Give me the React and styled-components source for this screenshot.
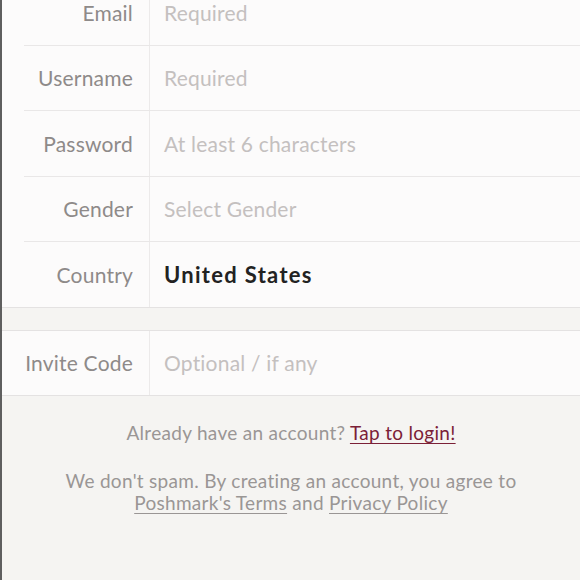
import React from "react";
import styled, { createGlobalStyle } from "styled-components";

const Global = createGlobalStyle`
  html, body { margin: 0; padding: 0; background: #f5f4f2; }
  body { font-family: "Lato", "Open Sans", sans-serif; overflow: hidden; }
`;

const Page = styled.div`
  width: 580px;
  height: 580px;
  box-sizing: border-box;
  border-left: 2px solid #5f5f5f;
  background: #f5f4f2;
  overflow: hidden;
`;

const Section = styled.div`
  background: #fcfbfb;
  border-bottom: 1px solid #e4e2e2;
  border-top: ${(p) => (p.$top ? "1px solid #e4e2e2" : "none")};
  margin-top: ${(p) => p.$offset || 0}px;
`;

const Row = styled.div`
  display: grid;
  grid-template-columns: 126px 1fr;
  margin-left: 22px;
  height: 64.5px;
  border-bottom: ${(p) => (p.$last ? "none" : "1px solid #e9e7e7")};
`;

const Label = styled.div`
  display: flex;
  align-items: center;
  justify-content: flex-end;
  padding-right: 16px;
  border-right: 1px solid #eceaea;
  color: #8e8a89;
  font-size: 21px;
  letter-spacing: 0.2px;
`;

const Value = styled.div`
  display: flex;
  align-items: center;
  padding-left: 14px;
  font-size: ${(p) => (p.$filled ? 22 : 21)}px;
  letter-spacing: ${(p) => (p.$filled ? 1.3 : 0.2)}px;
  color: ${(p) => (p.$filled ? "#222" : "#c4c0bf")};
  font-weight: ${(p) => (p.$filled ? 700 : 400)};
`;

const Gap = styled.div`
  height: 22px;
`;

const Footer = styled.div`
  text-align: center;
  color: #9a9695;
  font-size: 19px;
  letter-spacing: 0.3px;
  padding-top: 26px;
`;

const Line = styled.p`
  margin: 0 0 ${(p) => p.$mb || 0}px;
  line-height: 22px;
`;

const Link = styled.a`
  color: ${(p) => (p.$accent ? "#7b2037" : "#9a9695")};
  text-decoration: underline;
  text-underline-offset: 3px;
  text-decoration-thickness: 1px;
`;

const fields = [
  { label: "Email", value: "Required" },
  { label: "Username", value: "Required" },
  { label: "Password", value: "At least 6 characters" },
  { label: "Gender", value: "Select Gender" },
  { label: "Country", value: "United States", filled: true },
];

export default function App() {
  return (
    <Page>
      <Global />
      <Section $offset={-20}>
        {fields.map((f, i) => (
          <Row key={f.label} $last={i === fields.length - 1}>
            <Label>{f.label}</Label>
            <Value $filled={f.filled}>{f.value}</Value>
          </Row>
        ))}
      </Section>
      <Gap />
      <Section $top>
        <Row $last>
          <Label>Invite Code</Label>
          <Value>Optional / if any</Value>
        </Row>
      </Section>
      <Footer>
        <Line $mb={26}>
          Already have an account? <Link $accent>Tap to login!</Link>
        </Line>
        <Line>We don't spam. By creating an account, you agree to</Line>
        <Line>
          <Link>Poshmark's Terms</Link> and <Link>Privacy Policy</Link>
        </Line>
      </Footer>
    </Page>
  );
}
